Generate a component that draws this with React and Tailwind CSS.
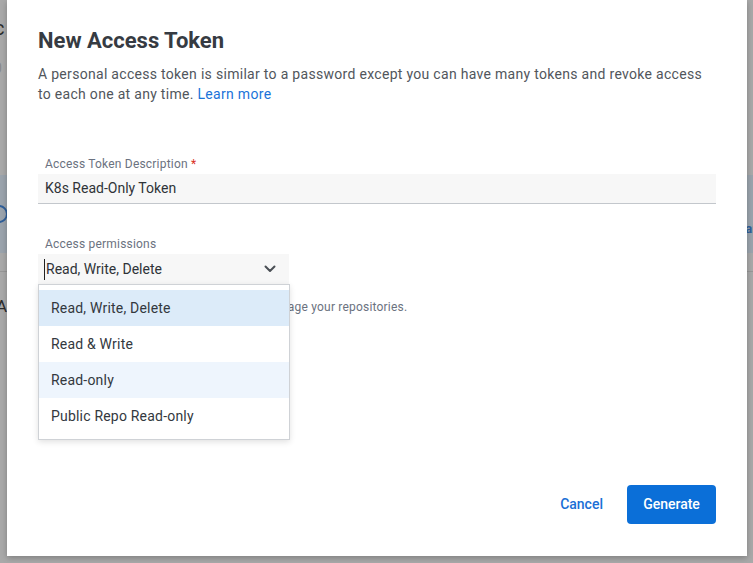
import React from "react";

const options = ["Read, Write, Delete", "Read & Write", "Read-only", "Public Repo Read-only"];

const Chevron = () => (
  <svg width="12" height="8" viewBox="0 0 12 8" fill="none">
    <path d="M1.5 1.5 6 6l4.5-4.5" stroke="#4a4f55" strokeWidth="2" strokeLinecap="round" strokeLinejoin="round" />
  </svg>
);

export default function App() {
  return (
    <div className="relative h-[563px] w-[753px] overflow-hidden bg-[#a9a9a9] font-['Roboto',sans-serif]">
      {/* page behind the overlay, only its edges show */}
      <div className="flex h-full flex-col text-[#2c2c2c]">
        <div className="h-[14px]" />
        <div className="text-[20px] leading-[28px] -ml-[6px]">c</div>
        <div className="mt-[16px] text-[14px] text-[#8a8a8a] -ml-[6px]">0</div>
        <div className="mt-[96px] flex h-[78px] items-center justify-between bg-[#9ba4ad]">
          <div className="-ml-[10px] h-[18px] w-[18px] rounded-full border-2 border-[#2f5f9a]" />
          <span className="-mr-[4px] mt-[30px] text-[13px] font-bold text-[#2f5f9a]">ar</span>
        </div>
        <div className="mt-[18px] h-px bg-[#979797]" />
        <div className="mt-[22px] text-[17px] -ml-[4px]">A</div>
      </div>

      {/* modal */}
      <div className="absolute left-[7px] top-0 flex h-[556px] w-[740px] flex-col bg-white px-[31px] pt-[27px] shadow-[0_2px_6px_rgba(0,0,0,0.25)]">
        <h2 className="text-[22px] font-bold leading-[28px] text-[#363b42]">New Access Token</h2>
        <p className="mt-[9px] text-[14px] leading-[20px] tracking-[0.3px] text-[#51565c]">
          A personal access token is similar to a password except you can have many tokens and revoke access
          <br />
          to each one at any time. <span className="text-[#1a73d9]">Learn more</span>
        </p>

        <div className="mt-[52px]">
          <div className="px-[7px] text-[12px] leading-[16px] tracking-[0.2px] text-[#6b7280]">
            Access Token Description <span className="text-[#d93025]">*</span>
          </div>
          <div className="mt-[2px] flex h-[30px] items-center border-b border-[#c3c7cc] bg-[#f7f7f7] px-[7px] text-[14px] text-[#2f3338]">
            K8s Read-Only Token
          </div>
        </div>

        <div className="mt-[32px]">
          <div className="px-[7px] text-[12px] leading-[16px] tracking-[0.2px] text-[#6b7280]">Access permissions</div>
          <div className="relative w-[251px]">
            <div className="mt-[2px] flex h-[30px] items-center justify-between bg-[#f7f7f7] px-[7px] text-[14px] text-[#2f3338]">
              <span className="border-l border-[#222] pl-px -ml-[1px]">Read, Write, Delete</span>
              <span className="mr-[6px]"><Chevron /></span>
            </div>
            <ul className="absolute left-0 top-[30px] z-10 w-[252px] border border-[#cfd2d6] bg-white py-[5px] shadow-[0_2px_6px_rgba(0,0,0,0.12)]">
              {options.map((o, i) => (
                <li
                  key={o}
                  className={
                    "flex h-[36px] items-center px-[12px] text-[14px] tracking-[0.2px] text-[#33383e] " +
                    (i === 0 ? "bg-[#dcebf9]" : i === 2 ? "bg-[#eef5fd]" : "")
                  }
                >
                  {o}
                </li>
              ))}
            </ul>
          </div>
          <p className="mt-[14px] px-[7px] text-[12px] tracking-[0.2px] text-[#6b7280]">
            Pick what this token is allowed to do to manage your repositories.
          </p>
        </div>

        <div className="mt-auto mb-[32px] flex items-center justify-end gap-[24px]">
          <button className="text-[14px] font-medium text-[#1a6fd6]">Cancel</button>
          <button className="h-[39px] w-[89px] rounded-[4px] bg-[#0b6fd8] text-[14px] font-medium text-white">Generate</button>
        </div>
      </div>
    </div>
  );
}
